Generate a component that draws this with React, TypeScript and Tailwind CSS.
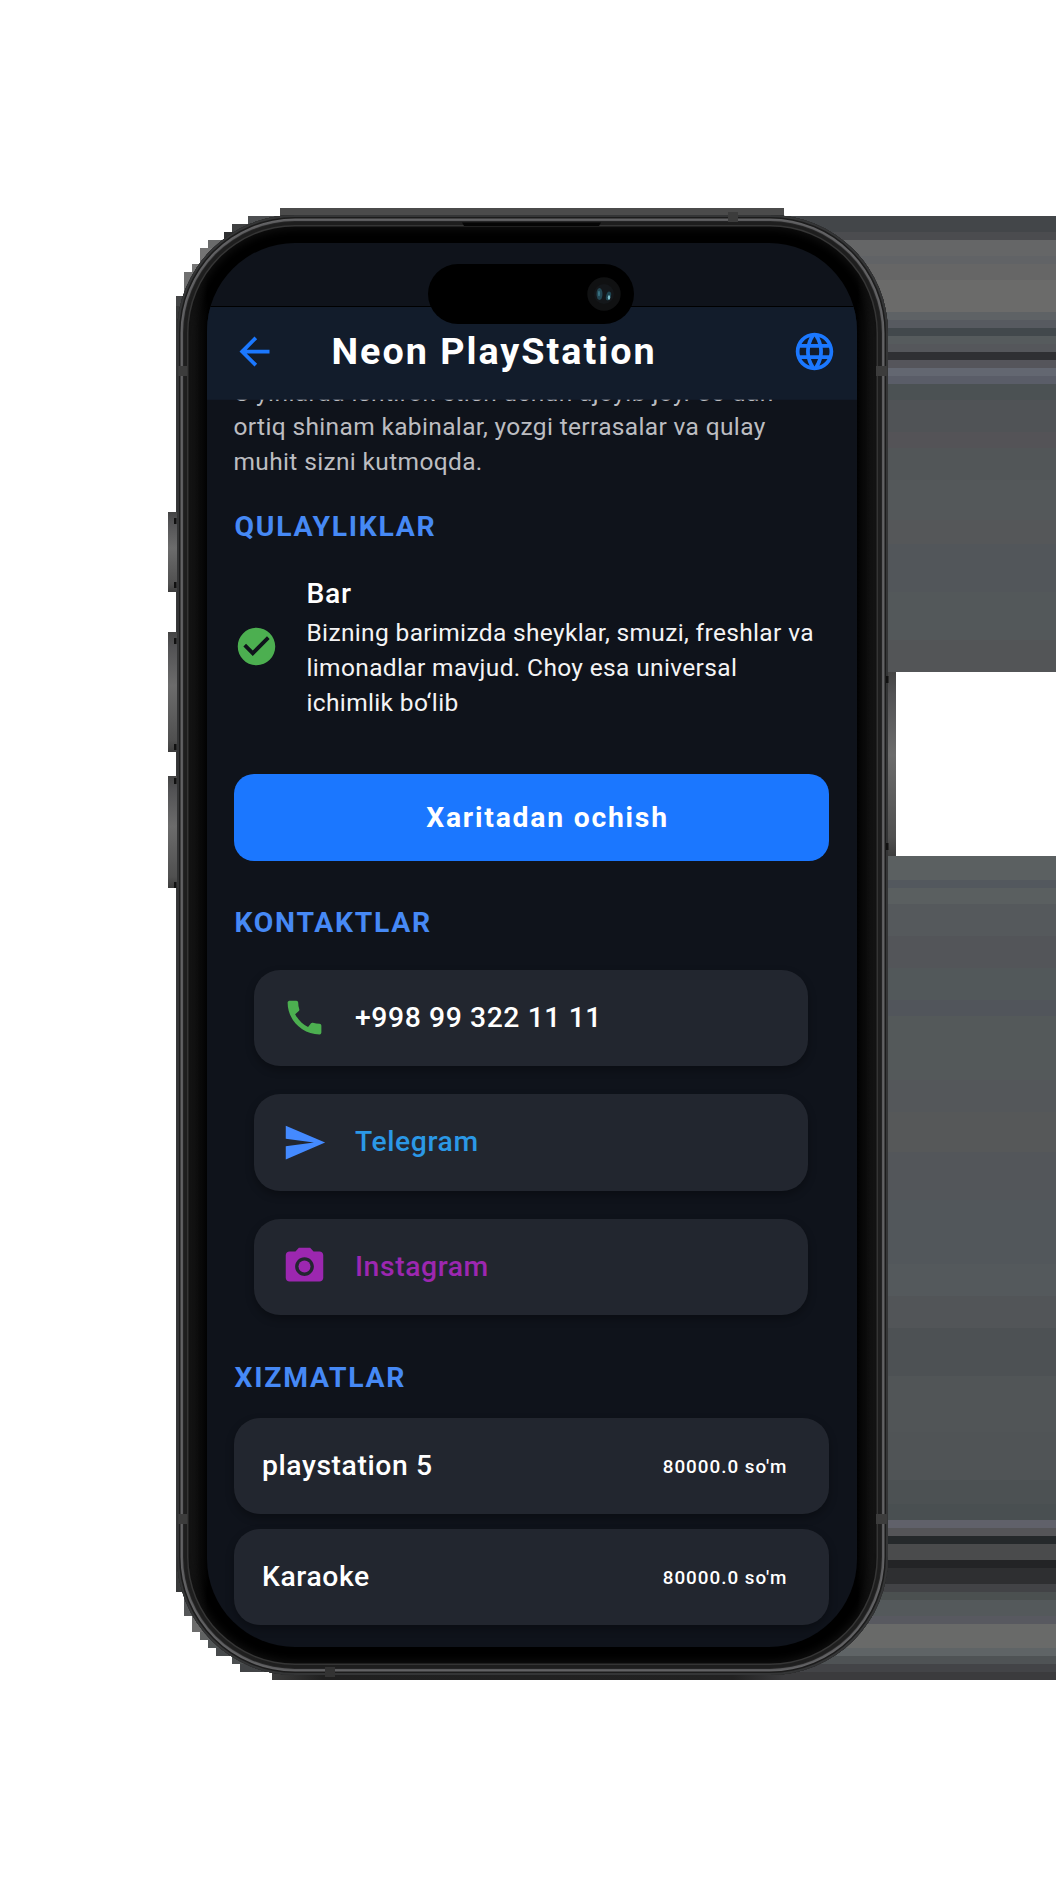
import type { ReactNode } from 'react';
import {
  MdArrowBack,
  MdCall,
  MdCameraAlt,
  MdCheckCircle,
  MdLanguage,
  MdSend,
} from 'react-icons/md';

/* Horizontal bands to the right of the device: [top, bottom, colour] */
const bands: [number, number, string][] = [
  [216, 232, '#434649'],
  [232, 240, '#4b4c4f'],
  [240, 256, '#656667'],
  [256, 264, '#616366'],
  [264, 280, '#666666'],
  [280, 312, '#6b6b6a'],
  [312, 320, '#5e6265'],
  [320, 328, '#575a60'],
  [328, 336, '#42484c'],
  [336, 344, '#565b5d'],
  [344, 352, '#55575b'],
  [352, 360, '#2f3033'],
  [360, 368, '#55555b'],
  [368, 376, '#636771'],
  [376, 384, '#5a5d68'],
  [384, 400, '#4b5153'],
  [400, 432, '#505356'],
  [432, 448, '#545357'],
  [448, 480, '#525658'],
  [480, 520, '#54585a'],
  [520, 544, '#555759'],
  [544, 592, '#52565a'],
  [592, 640, '#53585a'],
  [640, 672, '#535557'],
  [856, 880, '#5b6061'],
  [880, 888, '#53585e'],
  [888, 904, '#5a5f60'],
  [904, 936, '#55595c'],
  [936, 968, '#535559'],
  [968, 1000, '#52585a'],
  [1000, 1016, '#51555b'],
  [1016, 1080, '#54595a'],
  [1080, 1112, '#54575a'],
  [1112, 1152, '#565859'],
  [1152, 1200, '#53565a'],
  [1200, 1264, '#52575b'],
  [1264, 1296, '#54595c'],
  [1296, 1328, '#525558'],
  [1328, 1376, '#4d5154'],
  [1376, 1432, '#515557'],
  [1432, 1480, '#505456'],
  [1480, 1504, '#4c5153'],
  [1504, 1520, '#494f51'],
  [1520, 1528, '#60616a'],
  [1528, 1536, '#555558'],
  [1536, 1544, '#25292b'],
  [1544, 1560, '#4a4b4c'],
  [1560, 1568, '#232426'],
  [1568, 1584, '#2e2f31'],
  [1584, 1592, '#424346'],
  [1592, 1600, '#4b5050'],
  [1600, 1616, '#54595b'],
  [1616, 1624, '#585960'],
  [1624, 1648, '#696a69'],
  [1648, 1656, '#5f6466'],
  [1656, 1664, '#4f5355'],
  [1664, 1672, '#434447'],
  [1672, 1680, '#3b3b3d'],
];

/* Stepped edge at the left corners: [left, top, height, colour] */
const steps: [number, number, number, string][] = [
  [248, 216, 8, '#4d4f51'],
  [232, 224, 8, '#3f4041'],
  [224, 232, 8, '#2f3031'],
  [208, 240, 8, '#6a6b6b'],
  [200, 248, 16, '#747474'],
  [192, 264, 8, '#767676'],
  [184, 272, 24, '#707070'],
  [176, 296, 10, '#444546'],
  [176, 306, 1286, '#38393a'],
  [184, 1592, 24, '#555758'],
  [192, 1616, 16, '#6c6c6c'],
  [200, 1632, 8, '#606262'],
  [208, 1640, 8, '#505455'],
  [216, 1648, 8, '#474a4c'],
  [232, 1656, 8, '#4c4f50'],
  [240, 1664, 8, '#424446'],
];

function Backdrop() {
  return (
    <svg className="absolute inset-0" width="1063" height="1890" shapeRendering="crispEdges" aria-hidden="true">
      <defs>
        <linearGradient id="key" x1="0" y1="0" x2="0" y2="1">
          <stop offset="0" stopColor="#444" />
          <stop offset="0.12" stopColor="#525254" />
          <stop offset="0.45" stopColor="#6c6c6c" />
          <stop offset="0.9" stopColor="#505050" />
          <stop offset="1" stopColor="#3c3c3c" />
        </linearGradient>
        <linearGradient id="foot" x1="0" y1="0" x2="1" y2="0">
          <stop offset="0" stopColor="#3c3c3c" />
          <stop offset="0.1" stopColor="#202020" />
          <stop offset="0.9" stopColor="#222" />
          <stop offset="1" stopColor="#3b3b3d" />
        </linearGradient>
      </defs>
      <rect x="280" y="208" width="504" height="30" fill="#4b4b4b" />
      {bands.map(([top, bottom, fill]) => (
        <rect key={top} x="780" y={top} width="276" height={bottom - top} fill={fill} />
      ))}
      {steps.map(([left, top, height, fill]) => (
        <rect key={top} x={left} y={top} width={320 - left} height={height} fill={fill} />
      ))}
      <rect x="272" y="1660" width="512" height="20" fill="url(#foot)" />
      <rect x="168" y="512" width="10" height="80" fill="url(#key)" />
      <rect x="168" y="632" width="10" height="120" fill="url(#key)" />
      <rect x="168" y="776" width="10" height="112" fill="url(#key)" />
      <rect x="886" y="672" width="10" height="184" fill="url(#key)" />
    </svg>
  );
}

/* Antenna breaks, speaker slot and key seams on the metal rim */
function RimDetails() {
  return (
    <svg className="pointer-events-none absolute inset-0" width="1063" height="1890" aria-hidden="true">
      <g fill="#3c3c3c">
        <rect x="178" y="366" width="9" height="10" />
        <rect x="876" y="366" width="11" height="10" />
        <rect x="178" y="1514" width="9" height="10" />
        <rect x="876" y="1514" width="11" height="10" />
        <rect x="728" y="212" width="10" height="10" />
        <rect x="325" y="1667" width="10" height="10" fill="#333" />
      </g>
      <path d="M462 222.500H601L599 226H464Z" fill="#050505" />
      <g fill="#111">
        {[518, 582, 638, 744, 778, 882].map((y) => (
          <rect key={y} x="174" y={y} width="2.500" height="6" />
        ))}
        <rect x="886" y="676" width="2.500" height="7" />
        <rect x="886" y="843" width="2.500" height="7" />
      </g>
    </svg>
  );
}

function SectionTitle({ children, className }: { children: ReactNode; className: string }) {
  return (
    <h2 className={`pl-[1px] text-[28.3px] leading-[34px] font-bold tracking-[1.75px] text-[#4689f5] ${className}`}>
      {children}
    </h2>
  );
}

function ContactCard({ icon, label, color }: { icon: ReactNode; label: string; color: string }) {
  return (
    <a className="flex h-[96.5px] items-center gap-[28.5px] rounded-[26px] bg-[#22262f] pl-[27.5px] shadow-[0_4px_8px_rgba(0,0,0,0.3)]">
      {icon}
      <span className={`text-[28.3px] leading-[34px] font-medium tracking-[0.6px] ${color}`}>{label}</span>
    </a>
  );
}

function ServiceCard({ name, price }: { name: string; price: string }) {
  return (
    <div className="flex h-[96.5px] items-center justify-between rounded-[26px] bg-[#22262f] pr-[41px] pl-[28.5px] shadow-[0_4px_8px_rgba(0,0,0,0.3)]">
      <span className="text-[28.3px] leading-[34px] font-medium tracking-[0.6px] text-white">{name}</span>
      <span className="pt-[2px] text-[18.84px] font-medium tracking-[1px] text-white">{price}</span>
    </div>
  );
}

function Island() {
  return (
    <div className="absolute top-[20.5px] left-[221px] z-20 flex h-[60.5px] w-[206px] items-center justify-end rounded-full bg-black pr-[13px]">
      <svg width="34" height="34" viewBox="0 0 34 34" aria-hidden="true">
        <circle cx="17" cy="17" r="16.700" fill="#101112" />
        <circle cx="17" cy="17" r="10" fill="#14171a" />
        <ellipse cx="12.500" cy="17" rx="3" ry="6" fill="#234652" />
        <ellipse cx="21.500" cy="19" rx="2.400" ry="4.500" fill="#1f4551" transform="rotate(15 21.500 19)" />
        <ellipse cx="22" cy="20.500" rx="1.200" ry="2.200" fill="#7fc0cc" />
        <ellipse cx="12" cy="16.500" rx="1" ry="2.800" fill="#3c7686" />
      </svg>
    </div>
  );
}

export default function App() {
  return (
    <div className="relative h-[1890px] w-[1063px] overflow-hidden bg-white pt-[215px] pl-[176.5px] font-[Roboto,sans-serif]">
      <Backdrop />
      <div className="relative h-[1460px] w-[711px] rounded-[118px] bg-[linear-gradient(90deg,#161616_14px,#000_31px,#000_680px,#161616_697px)] pt-[28px] pr-[31px] pb-[28px] pl-[30.5px] shadow-[inset_0_0_0_2px_#343536,inset_0_0_0_3.5px_#1c1c1c,inset_0_0_1px_6px_#626264,inset_0_0_0_10px_#1e1e1e,inset_0_0_0_11.5px_#353535,inset_0_0_8px_14px_#101010]">
        <div className="relative flex h-full flex-col overflow-hidden rounded-[88px] bg-[#0f131b]">
          <div className="h-[63px] shrink-0" />
          <header className="z-10 flex h-[94px] shrink-0 items-center border-t border-b border-t-black border-b-[#121c2c]/70 bg-[#121c2b] bg-clip-padding pr-[19.5px] pb-[3px] pl-[24.5px] text-[#1b78ff]">
            <MdArrowBack size={45} />
            <h1 className="ml-[55px] flex-1 pb-[2px] text-[37.7px] leading-[44px] font-bold tracking-[2px] text-white">
              Neon PlayStation
            </h1>
            <MdLanguage size={45} />
          </header>
          <main className="-mt-px flex flex-1 flex-col overflow-hidden pr-[28px] pl-[26.5px]">
            <p className="-mt-[23.5px] shrink-0 text-[24.5px] leading-[34.7px] tracking-[0.35px] whitespace-nowrap text-[#bcbdc1]">
              <span className="tracking-[0.42px]">O‘yinlarda ishtirok etish uchun ajoyib joy. 50 dan</span>
              <br />
              ortiq shinam kabinalar, yozgi terrasalar va qulay
              <br />
              muhit sizni kutmoqda.
            </p>
            <SectionTitle className="mt-[30px]">QULAYLIKLAR</SectionTitle>
            <div className="mt-[33.5px] flex shrink-0 items-center">
              <MdCheckCircle size={45} className="mb-[4px] shrink-0 text-[#4caf50]" />
              <div className="ml-[28px]">
                <h3 className="text-[28.3px] leading-[34px] font-medium tracking-[0.7px] text-white">Bar</h3>
                <p className="mt-[5px] text-[24.5px] leading-[34.7px] tracking-[0.35px] whitespace-nowrap text-[#f4f4f5]">
                  Bizning barimizda sheyklar, smuzi, freshlar va
                  <br />
                  limonadlar mavjud. Choy esa universal
                  <br />
                  ichimlik bo‘lib
                </p>
              </div>
            </div>
            <button className="mt-[54px] flex h-[86.5px] shrink-0 items-center justify-center rounded-[20px] bg-[#1b77ff] pt-[1px] pl-[33px] text-[28.3px] leading-[34px] font-bold tracking-[1.785px] text-white">
              Xaritadan ochish
            </button>
            <SectionTitle className="mt-[45px]">KONTAKTLAR</SectionTitle>
            <div className="mr-[21px] ml-[20.5px] mt-[30px] flex flex-col gap-[28px]">
              <ContactCard icon={<MdCall size={45} className="text-[#4caf50]" />} label="+998 99 322 11 11" color="text-white" />
              <ContactCard icon={<MdSend size={45} className="text-[#448aff]" />} label="Telegram" color="text-[#2b98e6]" />
              <ContactCard icon={<MdCameraAlt size={45} className="text-[#9c27b0]" />} label="Instagram" color="text-[#9c27b0]" />
            </div>
            <SectionTitle className="mt-[45.5px]">XIZMATLAR</SectionTitle>
            <div className="mt-[23px] flex flex-col gap-[14.5px]">
              <ServiceCard name="playstation 5" price="80000.0 so'm" />
              <ServiceCard name="Karaoke" price="80000.0 so'm" />
            </div>
          </main>
          <Island />
        </div>
      </div>
      <RimDetails />
    </div>
  );
}
